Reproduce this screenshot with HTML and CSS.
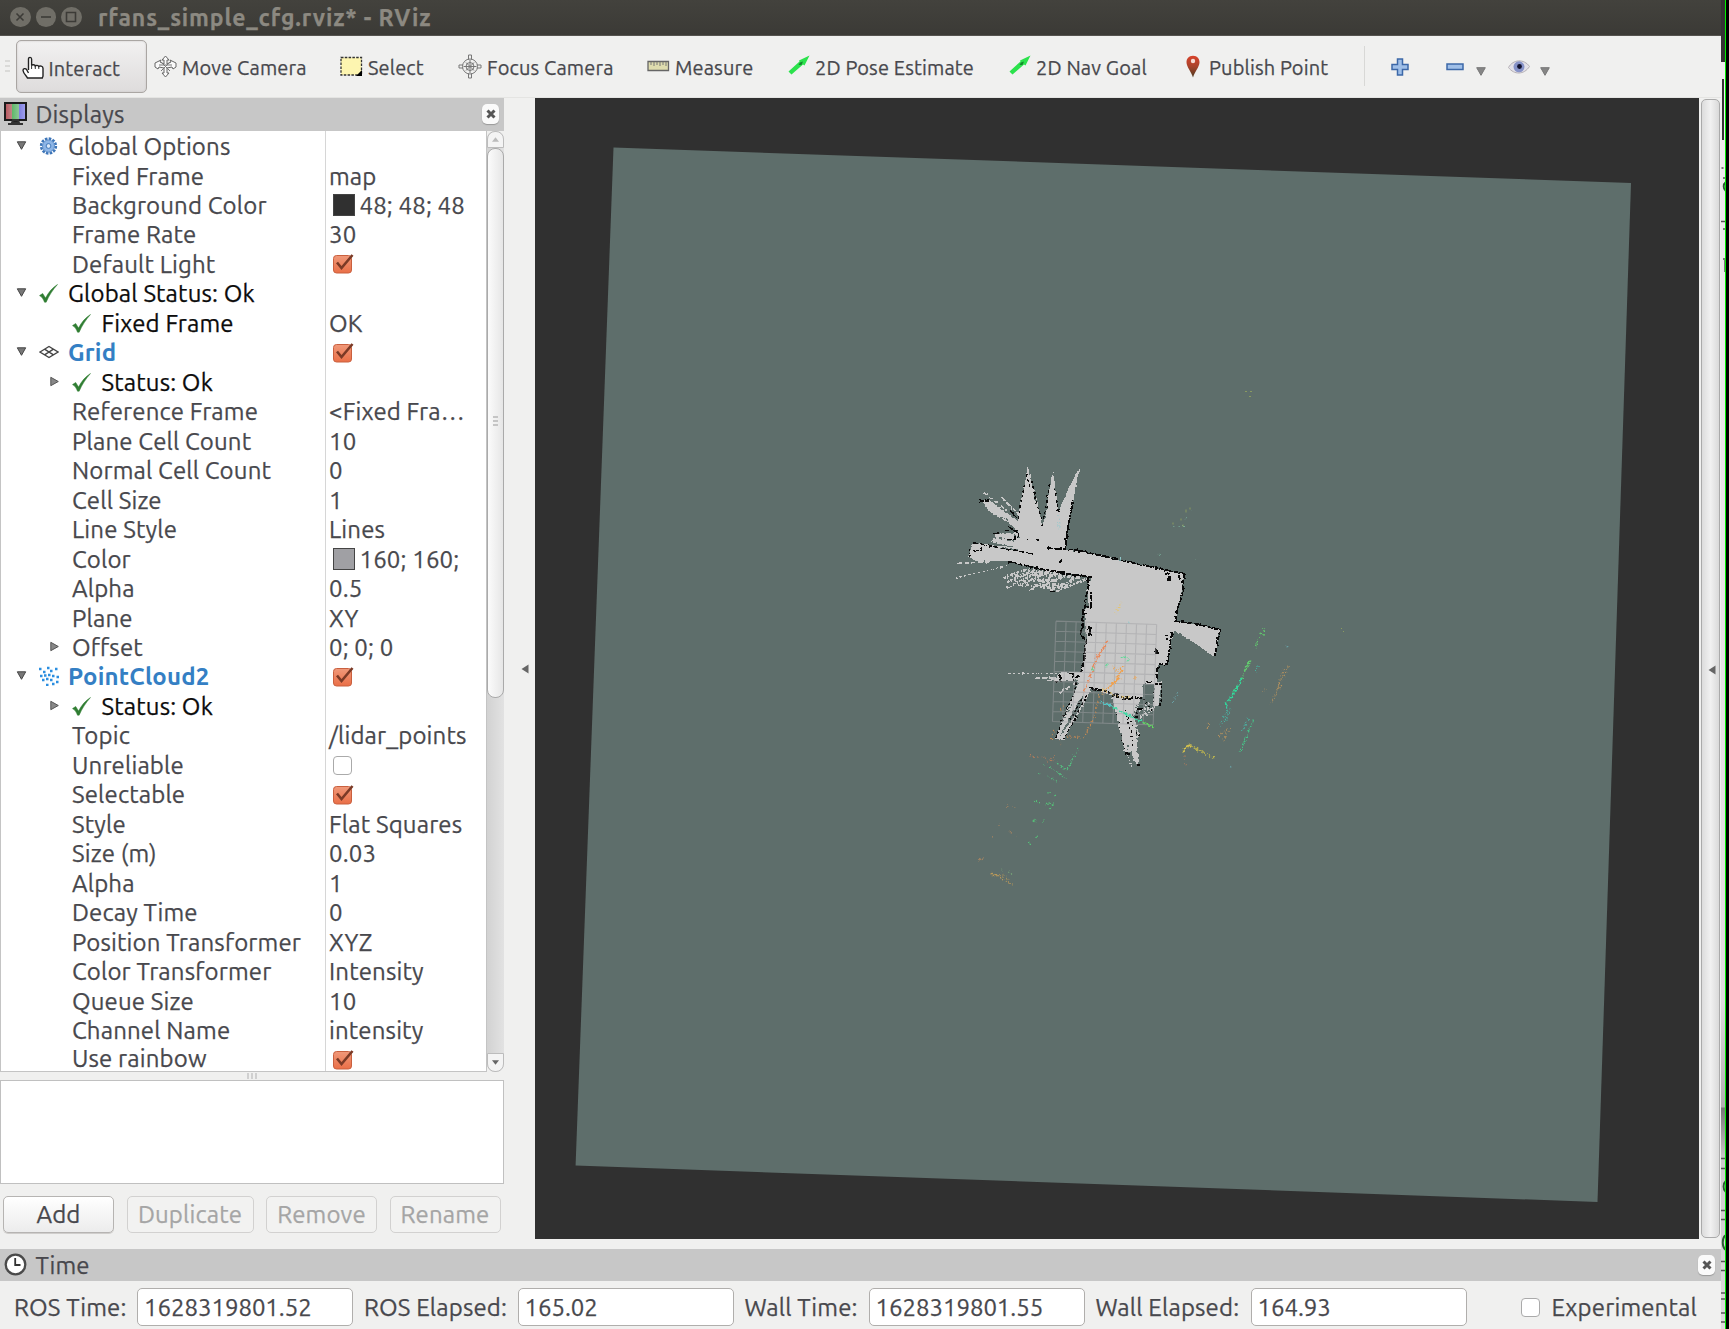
FILE: index.html
```html
<!DOCTYPE html>
<html lang="en">
<head>
<meta charset="utf-8">
<title>rfans_simple_cfg.rviz* - RViz</title>
<link rel="stylesheet" href="styles.css">
</head>
<body>
<svg class="defs" width="0" height="0" aria-hidden="true">
  <defs>
    <linearGradient id="orange" x1="0" y1="0" x2="0" y2="1"><stop offset="0" stop-color="#f0997a"/><stop offset="1" stop-color="#ea6f47"/></linearGradient>
    <linearGradient id="pinfill" x1="0" y1="0" x2="0" y2="1"><stop offset="0" stop-color="#d9432c"/><stop offset=".5" stop-color="#a8432b"/><stop offset="1" stop-color="#4a3a20"/></linearGradient>
    <linearGradient id="rgb" x1="0" y1="0" x2="1" y2="0"><stop offset="0" stop-color="#b8525c"/><stop offset=".33" stop-color="#c08585"/><stop offset=".34" stop-color="#5fb86a"/><stop offset=".66" stop-color="#8cc795"/><stop offset=".67" stop-color="#7f7fe0"/><stop offset="1" stop-color="#a3a3ee"/></linearGradient>
    <filter id="rough" x="-5%" y="-5%" width="110%" height="110%" color-interpolation-filters="sRGB"><feTurbulence type="fractalNoise" baseFrequency=".09" numOctaves="2" seed="4"/><feDisplacementMap in="SourceGraphic" scale="9" xChannelSelector="R" yChannelSelector="G"/></filter>
    <filter id="scatter" x="-5%" y="-5%" width="110%" height="110%" color-interpolation-filters="sRGB"><feTurbulence type="fractalNoise" baseFrequency=".12" numOctaves="2" seed="9"/><feDisplacementMap in="SourceGraphic" scale="16" xChannelSelector="R" yChannelSelector="G"/></filter>
    <symbol id="check" viewBox="0 0 22 22"><rect x="1.500" y="2.500" width="18" height="17.500" rx="3" fill="url(#orange)" stroke="#c9603f"/><path d="M5 9.500 9.500 15 20.500 2" fill="none" stroke="#7b3a26" stroke-width="2.600"/></symbol>
    <symbol id="ok" viewBox="0 0 18 18"><path d="M0.500 11 3.500 9 6.200 13.200C9 8 12.500 3.500 17.500.5 13 5.500 9.500 11 6.800 17.200H5.200C4.300 14.500 2.500 12 .5 11Z" fill="#2f7d32" stroke="#2f7d32" stroke-width=".5"/></symbol>
    <symbol id="open" viewBox="0 0 10 9"><path d="M.8.800H9.200L5 8.300Z" fill="#777" stroke="#444"/></symbol>
    <symbol id="closed" viewBox="0 0 9 10"><path d="M.8.800V9.200L8.300 5Z" fill="#888" stroke="#555"/></symbol>
    <symbol id="arrow" viewBox="0 0 22 20"><path d="M.5 16.500 11.500 6.500 11 5.500 21.500.5 16.500 10.500 15 9.500 3.500 19.500Z" fill="#2be24c"/><path d="M10.500 10 12 7.500l3-1-1.500 3.500Z" fill="#138a2b"/></symbol>
    <symbol id="drop" viewBox="0 0 10 9"><path d="M.7.700H9.300L5 8.300Z" fill="#858585" stroke="#777"/></symbol>
  </defs>
</svg>
<div class="desktop">
<div class="window">
  <header class="titlebar">
    <span class="dot"><svg viewBox="0 0 20 20"><path d="m6.500 6.500 7 7m0-7-7 7"/></svg></span>
    <span class="dot"><svg viewBox="0 0 20 20"><path d="M5 10H15"/></svg></span>
    <span class="dot"><svg viewBox="0 0 20 20"><path d="M5.500 5.500h9v9h-9Z"/></svg></span>
    <h1>rfans_simple_cfg.rviz* - RViz</h1>
  </header>

  <nav class="toolbar">
    <span class="grip"><i></i><i></i><i></i></span>
    <button class="tool active"><svg width="23" height="24" viewBox="0 0 23 24"><path d="M6.500 14V3.200C6.500.7 9.600.7 9.600 3.200V9.500C10 8.500 13 8.500 13.300 10c.8-1 3-.9 3.400.5 1-.9 4.300-.6 4.300 1.800V20c0 1-.8 1.500-.8 2H5.500C5 20 1.500 18 1 14.500 1 12.500 3.500 12 4.500 13.500L6.500 17" fill="#fff" stroke="#222" stroke-width="1.400"/><path d="M9.600 9v4M13.300 10v3M16.800 10.500V13" stroke="#333"/></svg><span>Interact</span></button>
    <span></span>
    <button class="tool"><svg width="23" height="23" viewBox="0 0 23 23"><path d="M11.500 1 15 5H13V9l4-2-1-2 6 3v4l-3 2-1-2-5 1v5h2l-3.500 4L8 18h2V13L5 12 4 14 1 12V8L7 5 6 7l4 2V5H8Z" fill="#fafafa" stroke="#666"/><path d="M7 7 16 16M16 7 7 16M5 10h13" stroke="#777" fill="none"/></svg><span>Move Camera</span></button>
    <button class="tool"><svg width="23" height="21" viewBox="0 0 23 21"><path d="M1 1.500H21.500V19H1Z" fill="#fdf5b0" stroke="#333" stroke-width="1.300" stroke-dasharray="2.500 1.300"/><path d="M22 14v6H16Z"/></svg><span>Select</span></button>
    <button class="tool"><svg width="24" height="25" viewBox="0 0 24 25"><g fill="none" stroke="#777"><circle cx="12" cy="12.500" r="7.500"/><circle cx="12" cy="12.500" r="4"/><path d="M12 6V19M5.500 12.500h13M10.500 5.500V1h3v4.500M10.500 19.500V24h3v-4.500M5 11H1v3h4M19 11h4v3h-4M8 8.500l8 8m0-8-8 8"/></g></svg><span>Focus Camera</span></button>
    <button class="tool"><svg width="23" height="12" viewBox="0 0 23 12"><path d="M1 1.500H21.500V10.500H1Z" fill="#dedcae" stroke="#666" stroke-width="1.300"/><path d="M4 2V5M7 2V6M10 2V5M13 2V6M16 2V5M19 2V6" stroke="#777"/></svg><span>Measure</span></button>
    <button class="tool"><svg class="rise" width="22" height="20"><use href="#arrow"/></svg><span>2D Pose Estimate</span></button>
    <button class="tool"><svg class="rise" width="22" height="20"><use href="#arrow"/></svg><span>2D Nav Goal</span></button>
    <button class="tool pin"><svg width="16" height="23" viewBox="0 0 16 23"><path d="M8 .7C3.500.7 1.500 3.800 1.500 7.300 1.500 12 6.500 17 8 22.500 9.500 17 14.500 12 14.500 7.300 14.500 3.800 12.500.7 8 .7Z" fill="url(#pinfill)"/><circle cx="8" cy="6" r="2.200" fill="#f6dcd4"/></svg><span>Publish Point</span></button>
    <span class="sep"></span>
    <svg class="glyph" width="18" height="18" viewBox="0 0 18 18"><path d="M6.500 1h5v5.500H17v5h-5.500V17h-5v-5.500H1v-5h5.500Z" fill="#9fbfe8" stroke="#3c68a8" stroke-width="1.500"/></svg>
    <svg class="glyph" width="18" height="8" viewBox="0 0 18 8"><path d="M1 1h16v5.500H1Z" fill="#9fbfe8" stroke="#3c68a8" stroke-width="1.500"/></svg>
    <svg class="glyph low" width="10" height="9"><use href="#drop"/></svg>
    <svg class="glyph" width="22" height="14" viewBox="0 0 22 14"><path d="M.5 7.500C5-.8 16-1.500 21.500 6.500 16 15 6 15 .5 7.500Z" fill="#e3e1e8" stroke="#b5b0b5"/><circle cx="11" cy="6.800" r="5.500" fill="#8793c8"/><circle cx="11.500" cy="6.500" r="2.400" fill="#12122e"/></svg>
    <svg class="glyph low" width="10" height="9"><use href="#drop"/></svg>
  </nav>

  <main class="workspace">
    <section class="displays">
      <div class="dock">
        <svg width="23" height="24" viewBox="0 0 23 24"><path d="M1 1H22V18H1Z" fill="url(#rgb)" stroke="#1b1b1b" stroke-width="2"/><path d="M9 18h5l1 3H8ZM4 22h15" fill="#222" stroke="#333" stroke-width="2"/></svg>
        <h2>Displays</h2><span class="close"><svg viewBox="0 0 10 10"><path d="m1.500 1.500 7 7m0-7-7 7"/></svg></span>
      </div>
      <div class="treewrap">
        <div class="tree">
          <div class="row top"><svg class="tw"><use href="#open"/></svg><svg class="ic gear" viewBox="0 0 20 20"><circle cx="10" cy="10" r="7.700" fill="none" stroke="#3d75b8" stroke-width="2.800" stroke-dasharray="2.700 1.330"/><circle cx="10" cy="10" r="6.300" fill="#8db5e6" stroke="#5b8cc8"/><circle cx="10" cy="10" r="2.500" fill="#dce9f8" stroke="#3d75b8"/></svg><span>Global Options</span><b></b></div>
          <div class="row"><span>Fixed Frame</span><b>map</b></div>
          <div class="row"><span>Background Color</span><b><i class="swatch dark"></i>48; 48; 48</b></div>
          <div class="row"><span>Frame Rate</span><b>30</b></div>
          <div class="row"><span>Default Light</span><b><svg class="cb"><use href="#check"/></svg></b></div>
          <div class="row top black"><svg class="tw"><use href="#open"/></svg><svg class="ic okay"><use href="#ok"/></svg><span>Global Status: Ok</span><b></b></div>
          <div class="row status black"><svg class="ic okay"><use href="#ok"/></svg><span>Fixed Frame</span><b class="soft">OK</b></div>
          <div class="row top blue"><svg class="tw"><use href="#open"/></svg><svg class="ic" viewBox="0 0 20 20"><path d="M1 10 10 4.500 19 10 10 15.500ZM5.500 7.200 14.500 12.800M14.500 7.200 5.500 12.800" fill="#fff" stroke="#444" stroke-width="1.400"/></svg><span>Grid</span><b><svg class="cb"><use href="#check"/></svg></b></div>
          <div class="row status sub black"><svg class="tw side"><use href="#closed"/></svg><svg class="ic okay"><use href="#ok"/></svg><span>Status: Ok</span><b></b></div>
          <div class="row"><span>Reference Frame</span><b>&lt;Fixed Fra…</b></div>
          <div class="row"><span>Plane Cell Count</span><b>10</b></div>
          <div class="row"><span>Normal Cell Count</span><b>0</b></div>
          <div class="row"><span>Cell Size</span><b>1</b></div>
          <div class="row"><span>Line Style</span><b>Lines</b></div>
          <div class="row"><span>Color</span><b><i class="swatch gray"></i>160; 160;</b></div>
          <div class="row"><span>Alpha</span><b>0.5</b></div>
          <div class="row"><span>Plane</span><b>XY</b></div>
          <div class="row sub"><svg class="tw side"><use href="#closed"/></svg><span>Offset</span><b>0; 0; 0</b></div>
          <div class="row top blue"><svg class="tw"><use href="#open"/></svg><svg class="ic" viewBox="0 0 20 20"><path d="M0 3h2.500M4 6h2.500M8 2h2.500M11 5h2.500M16 3h2.500M1 10h2.500M5 9.500h2.500M9 9h2.500M13 10h2.500M17.500 11H20M3 14h2.500M7 13h2.500M11 14h2.500M7 19h2.500M13 18h2.500M17 16h2.500" stroke="#2b8ee0" stroke-width="2.400"/></svg><span>PointCloud2</span><b><svg class="cb"><use href="#check"/></svg></b></div>
          <div class="row status sub black"><svg class="tw side"><use href="#closed"/></svg><svg class="ic okay"><use href="#ok"/></svg><span>Status: Ok</span><b></b></div>
          <div class="row"><span>Topic</span><b>/lidar_points</b></div>
          <div class="row"><span>Unreliable</span><b><i class="box"></i></b></div>
          <div class="row"><span>Selectable</span><b><svg class="cb"><use href="#check"/></svg></b></div>
          <div class="row"><span>Style</span><b>Flat Squares</b></div>
          <div class="row"><span>Size (m)</span><b>0.03</b></div>
          <div class="row"><span>Alpha</span><b>1</b></div>
          <div class="row"><span>Decay Time</span><b>0</b></div>
          <div class="row"><span>Position Transformer</span><b>XYZ</b></div>
          <div class="row"><span>Color Transformer</span><b>Intensity</b></div>
          <div class="row"><span>Queue Size</span><b>10</b></div>
          <div class="row"><span>Channel Name</span><b>intensity</b></div>
          <div class="row last"><span>Use rainbow</span><b><svg class="cb"><use href="#check"/></svg></b></div>
        </div>
        <div class="scroll">
          <span class="step up"><svg viewBox="0 0 8 5"><path d="M4 0 8 5H0Z"/></svg></span>
          <span class="thumb"><i></i><i></i><i></i></span>
          <span class="step down"><svg viewBox="0 0 8 5"><path d="M0 0H8L4 5Z"/></svg></span>
        </div>
      </div>
      <div class="splitter"><i></i><i></i><i></i></div>
      <div class="help"></div>
      <div class="actions"><button>Add</button><button disabled>Duplicate</button><button disabled>Remove</button><button disabled>Rename</button></div>
    </section>
    <div class="collapse"><svg width="8" height="10" viewBox="0 0 8 10"><path d="M7.500.500V9.500L.5 5Z"/></svg></div>

    <svg class="view" viewBox="535 97.500 1164 1141.500" preserveAspectRatio="none">
      <path d="M613.500 147 1631 182.500 1597.500 1201.500 575.600 1165Z" fill="#5e6e6b"/>
      <!-- occupancy map -->
      <g transform="translate(940 450) scale(.33333)" shape-rendering="crispEdges" filter="url(#rough)">
        <g fill="#c8c8c8">
          <path d="M263 45 275 100 292 150 305 225 316 205 328 120 338 62 348 120 355 185 385 115 418 50 400 150 385 230 376 297 455 308 535 325 600 343 733 370 722 440 706 512 770 522 840 538 832 580 824 620 760 575 702 540 692 590 685 638 655 645 650 695 632 695 632 738 606 740 590 770 583 800 597 850 590 890 598 945 580 930 575 905 555 908 545 860 530 800 515 735 455 712 430 765 370 868 345 866 375 790 402 730 418 690 345 688 320 686 350 678 365 665 425 665 432 600 440 560 432 480 447 470 440 410 455 380 380 370 300 355 200 332 110 333 85 318 100 275 160 285 230 290 155 275 165 250 235 245 200 205 150 185 125 150 150 150 235 212 240 160 255 100Z"/>
          <path d="M606 738V695H665L655 768 640 765 642 700H632V738Z"/>
        </g>
        <path d="m430 735-18 22-55 105 65-90ZM610 700h22v60h-22Z" fill="#5e6e6b"/>
        <g fill="none" stroke="#5e6e6b" stroke-width="4">
          <path d="M165 262 225 272M150 288 235 298M200 240 240 262M175 200 225 236M282 130 300 190" stroke-dasharray="6 5 11 4"/>
          <path d="M590 760 580 800M600 745 612 770M560 900 566 880M588 830 592 870M395 760 360 830" stroke-dasharray="5 6"/>
        </g>
        <g fill="none" stroke="#c8c8c8" stroke-width="4">
          <path d="M50 339 160 333M285 682H345M320 690H400M358 727 420 690M185 140 235 190M150 180 225 228M130 125 200 180" stroke-width="5" stroke-dasharray="16 5"/>
          <path d="M45 383 210 344M205 669H350" stroke-dasharray="7 7"/>
          <path d="M190 382 270 352M200 395 290 356M200 412 310 358M235 405 330 362M270 418 350 368M300 410 380 372M330 420 420 378M350 422 440 385" stroke-width="7" stroke-dasharray="9 3 5 4"/>
          <path d="M250 360 400 375M290 372 420 382M215 375 290 372M225 392 350 390M245 405 370 402M310 412 380 408" stroke-width="8" stroke-dasharray="5 6 12 4"/>
          <path d="M590 790 630 755M600 800 645 768M620 795 640 775M563 910 572 950M586 775H640" stroke-width="5" stroke-dasharray="5 4"/>
        </g>
        <g fill="none" stroke="#080808" stroke-width="4">
          <path d="M376 297 378 270 384 230 400 150M320 292 378 297 400 297 455 309 535 327 600 342 733 370M203 333 300 355 380 370 455 380" stroke-width="5.500" stroke-dasharray="30 2 14 3"/>
          <path d="M732 370 727 430 714 470 706 512 770 520M770 520 840 538 824 620" stroke-width="5.500" stroke-dasharray="14 4"/>
          <path d="M443 380 445 415 437 440 436 470H452V425M430 475 428 530 420 550 438 570 434 600 430 640 424 664M697 545 688 600 682 640 662 640 652 655V690" stroke-width="5.500" stroke-dasharray="18 3"/>
          <path d="M450 712 500 722 530 740 608 742M460 718H490M515 733H535M550 745H572" stroke-width="7" stroke-dasharray="9 5"/>
          <path d="M402 728 410 695M400 735 370 800 348 862M440 735 405 805 372 865M425 745 390 810" stroke-dasharray="7 6"/>
          <path d="M235 205 243 150 255 100M310 205 320 160 330 95M258 70 270 110M275 90 290 160 305 205M355 185 345 110" stroke-dasharray="9 7"/>
          <path d="M116 152H145V142M200 268H225V255M100 300H125V288M195 240 230 240M88 296 90 320M100 277 180 292 280 311M330 424H352M345 694H360V675M385 670H400V692M405 680H425M160 250H180M210 180 232 205M205 228 236 250V262" stroke-dasharray="16 4"/>
          <path d="M288 268h10M257 266h7M358 332h8M303 224h5M443 533h14M450 533v25M443 553h14M675 370h15M680 388h12M688 376v12M675 555h10M682 562v8M648 595v12h8M718 375v15M615 693h18M590 775h16M583 800h10M555 910h16M592 944h7M597 856v-6" stroke-width="5.500"/>
          <path d="M645 700h20v40l-7 30M425 520v30M432 490h8" stroke-width="5" stroke-dasharray="8 5"/>
          <path d="M555 780 575 850 578 885M565 800 590 850M530 790 545 860 556 905M610 745 635 780M590 760V800M640 700V760" stroke-dasharray="4 9"/>
        </g>
      </g>
      <!-- reference grid -->
      <g transform="translate(940 450) scale(.33333) matrix(30.200 1 -1.050 30.100 348 512)"><path d="M0 0V10M1 0V10M2 0V10M3 0V10M4 0V10M5 0V10M6 0V10M7 0V10M8 0V10M9 0V10M10 0V10M0 0H10M0 1H10M0 2H10M0 3H10M0 4H10M0 5H10M0 6H10M0 7H10M0 8H10M0 9H10M0 10H10" stroke="#a0a0a4" stroke-opacity=".5" stroke-width=".11" fill="none"/></g>
      <!-- lidar returns, coloured by intensity -->
      <g transform="translate(940 450) scale(.33333)" fill="none" stroke-width="5" filter="url(#scatter)">
        <path d="M503 570 470 625 450 680 430 725" stroke="#e8885a" stroke-dasharray="12 4"/>
        <path d="M548 645 530 690 495 718M515 700 540 680" stroke="#f0a04c" stroke-width="7" stroke-dasharray="7 3"/>
        <path d="M520 650 540 665M585 680v8M500 725 470 735" stroke="#e8a860" stroke-dasharray="5 6"/>
        <path d="M545 620h18v12M455 655h8M500 640v10" stroke="#62d898" stroke-dasharray="6 3"/>
        <path d="M480 752 520 770" stroke="#54c5c5"/><path d="M520 770 575 800 610 815" stroke="#42d7a5" stroke-dasharray="14 3"/><path d="M610 815 642 831" stroke="#62d860"/>
        <path d="M490 718 535 740 575 742M525 490 545 455" stroke="#e3c576" stroke-dasharray="4 6"/>
        <path d="M357 195V240M540 325h10M565 517h6" stroke="#8fc9cc" stroke-dasharray="3 7"/>
        <path d="M463 800 430 865M345 830 333 870M380 860h40M478 740 460 800M370 765 365 780" stroke="#c48952" stroke-dasharray="5 6" stroke-width="4"/>
        <path d="M703 228h35M736 203v3M752 178v3M658 310v4M768 327v3" stroke="#7ab09c" stroke-dasharray="3 10" stroke-width="3"/>
      </g>
      <g transform="translate(960 640) scale(.33333)" fill="none" stroke-width="4" filter="url(#scatter)">
        <path d="M914-36 900-12 885 20M905-20h12M868 60 855 90 843 125 820 155M873 60 850 95" stroke="#62cc6e" stroke-dasharray="9 5"/>
        <path d="M845 115 825 155 798 190V205" stroke="#32d79b" stroke-width="6" stroke-dasharray="10 2"/>
        <path d="M800 195 800 215 780 255M812 205 795 245M865 235 845 275M885 95 895 75" stroke="#49b5a5" stroke-dasharray="4 5"/>
        <path d="M880 240 850 310 840 335" stroke="#48c288" stroke-dasharray="11 4"/>
        <path d="M985 75 960 135 930 195M970 85 945 165M915 145 905 160M810 260 790 305M745 250 740 270M800 265 770 290" stroke="#b5925e" stroke-dasharray="4 6"/>
        <path d="M670 335 685 315 700 318M672 325 688 312" stroke="#d8c44c" stroke-width="5" stroke-dasharray="6 2"/>
        <path d="M700 318 765 355M705 325 730 332" stroke="#c8bd4c" stroke-dasharray="6 5"/>
        <path d="M675 345V372M210 345 265 355M268 355 285 345M330 290H365M300 300 305 315M270 360H285M258 362 275 350" stroke="#b07c5c" stroke-dasharray="4 7"/>
        <path d="M355 325 335 360 320 390 300 380M270 380 290 395 316 412M265 410 297 425M250 370h4M237 397h4M290 368 310 378" stroke="#55c080" stroke-dasharray="6 5"/>
        <path d="M265 457h10M283 465h5M225 482 240 487M255 492 282 490 270 505M218 538 228 542M250 542h4M226 588l4 4M206 609h4" stroke="#55c278" stroke-dasharray="6 4"/>
        <path d="M138 497h8M160 500h6M149 574h4M96 589h4M118 552v4M55 662 68 654M165 586h4" stroke="#a58462"/>
        <path d="M92 698 112 706 140 722 160 736M98 705 130 705 150 720" stroke="#b8985a" stroke-dasharray="5 5"/>
        <path d="M125 685v5M145 690 160 707" stroke="#79a878" stroke-dasharray="4 8"/>
        <path d="M810 378 820 384M978 18h4M640 185 650 160" stroke="#69a0a5" stroke-dasharray="4 8"/>
      </g>
      <path d="M1245 391h2M1250 391h2M1249 396h2M1186 509v3M1190 507v2M1181 518v2M1183 524v2M1173 522v2M1341 628h1M1343 631h1" stroke="#8a9a60" fill="none"/>
    </svg>
    <div class="rightbar"><svg width="8" height="10" viewBox="0 0 8 10"><path d="M7.500.500V9.500L.5 5Z"/></svg></div>
  </main>

  <section class="time">
    <div class="dock">
      <svg width="23" height="23" viewBox="0 0 23 23"><circle cx="11.500" cy="11.500" r="9.800" fill="#fff" stroke="#4a4a4a" stroke-width="2.300"/><path d="M11.200 5V12H16.500" fill="none" stroke="#333" stroke-width="1.800"/></svg>
      <h2>Time</h2><span class="close"><svg viewBox="0 0 10 10"><path d="m1.500 1.500 7 7m0-7-7 7"/></svg></span>
    </div>
    <div class="fields">
      <label class="w1">ROS Time:</label><output>1628319801.52</output>
      <label class="w2">ROS Elapsed:</label><output>165.02</output>
      <label class="w3">Wall Time:</label><output>1628319801.55</output>
      <label class="w4">Wall Elapsed:</label><output>164.93</output>
      <i class="box"></i><label class="exp">Experimental</label>
    </div>
  </section>
</div>
<aside class="behind">
  <svg width="5" height="1329" viewBox="0 0 5 1329"><path d="M1 79h2v61H1Z" fill="#333"/><path d="M.5 168h2M2 178h3M0 221.500h5M2 229h3M2 259h3M4 260v12M0 1158.500h5M0 1168.500h5M0 1210.500h5M0 1219.500h5M0 1261.500h5M0 1270.500h5M0 1293h5M0 1299h5M0 1313h5M0 1322h5" stroke="#555" stroke-width="1.500"/><path d="M5 182a4 5 0 0 0 0 9M5 1181a4 6 0 0 0 0 11M5 1235a5 8 0 0 0 0 15" fill="none" stroke="#2c5a35" stroke-width="2"/></svg>
</aside>
<div class="edge"></div>
</div>
</body>
</html>
```
FILE: styles.css
```css
* { box-sizing: border-box; }
body { margin: 0; background: #000; overflow: hidden; font-family: Ubuntu, "Noto Sans", sans-serif; font-size: 24px; letter-spacing: .14px; color: #48484d; -webkit-text-stroke: .25px; }
h1, h2 { margin: 0; }
button { font: inherit; letter-spacing: inherit; color: inherit; background: none; border: 0; padding: 0; margin: 0; }
svg { display: block; flex: none; }
.defs { position: absolute; }
.desktop { display: flex; width: 1729px; height: 1329px; }
.window { width: 1721px; display: flex; flex-direction: column; background: #f0f0ef; }

.titlebar { height: 35.500px; flex: none; display: flex; align-items: center; gap: 5px; padding-left: 10px; background: linear-gradient(#43423d, #3b3a36); border-bottom: 1px solid #55534f; }
.titlebar h1 { margin-left: 11.500px; padding-top: 2px; font-size: 23px; font-weight: 700; line-height: 34px; letter-spacing: .85px; color: #8c8981; white-space: nowrap; }
.dot { width: 20.500px; height: 20px; border-radius: 50%; background: #706e67; }
.dot svg { width: 20px; height: 20px; fill: none; stroke: #3c3b37; stroke-width: 1.600; }

.toolbar { height: 62px; flex: none; display: grid; grid-template-columns: 15.500px 131px 7.500px 186px 118px 189px 141px 221px 176px 179px 27px 55px 30px 31.500px 32px auto; align-items: center; font-size: 20px; border-bottom: 1px solid #e4e4e2; }
.tool { display: flex; align-items: center; gap: 5px; height: 53px; white-space: nowrap; text-align: left; line-height: 26px; }
.tool span { padding-top: 3px; }
.tool.active { gap: 4px; padding-left: 6px; border: 1px solid #aaa6a3; border-radius: 5px; background: linear-gradient(#f2f1f1, #dedcdc); box-shadow: inset 0 0 2px #c4c1c1; }
.tool.active svg { margin-top: 3px; margin-left: -1px; }
.tool.active span { padding-top: 5px; }
.tool svg.rise { position: relative; top: -1px; }
.tool.pin { gap: 8px; }
.grip { display: grid; gap: 3px; margin-left: 5px; width: 5px; }
.grip i { height: 2px; background: #dadad8; }
.sep { width: 1px; height: 40px; background: #d8d8d6; }
.glyph { margin-top: 1px; }
.glyph.low { margin-top: 10px; }

.workspace { flex: none; height: 1142px; display: flex; }
.displays { width: 504px; display: flex; flex-direction: column; }
.dock { height: 33px; flex: none; display: flex; align-items: center; background: #c7c7c7; padding: 0 5px 0 4px; }
.dock h2 { font-size: 24px; font-weight: 400; margin-left: 8.500px; padding-top: 1px; line-height: 31px; flex: 1; }
.close { width: 17px; height: 20px; display: grid; place-items: center; border-radius: 5px; background: #fafafa; box-shadow: 0 1px 1px #999; }
.close svg { width: 10px; height: 10px; stroke: #555; stroke-width: 3; }
.treewrap { height: 941px; flex: none; display: flex; }
.tree { width: 487px; padding-top: 1.300px; overflow: hidden; border: solid #c4c4c4; border-width: 0 1px 1px; background: linear-gradient(90deg, transparent 324px, #d6d6d6 324px, #d6d6d6 325px, transparent 325px) #fff; }
.row { height: 29.480px; display: flex; align-items: center; line-height: 29px; white-space: nowrap; padding-left: 71px; }
.row span { flex: 1; }
.row b { width: 157px; flex: none; font-weight: 400; display: flex; align-items: center; }
.row.last { height: 25.500px; line-height: 25px; padding-top: 0; align-items: flex-end; }
.row.last b { height: 25.500px; padding-top: 3px; }
.row.last span { padding-top: 2px; }
.row.top { padding-left: 15px; }
.row.sub { padding-left: 49px; }
.row.status { padding-left: 71px; }
.row.status.sub { padding-left: 49px; }
.tw { width: 11px; height: 9px; margin: 0 11.500px 3px 0; }
.tw.side { width: 9px; height: 11px; margin: 0 13px 2px 0; }
.ic { width: 20px; height: 20px; margin: 0 9.500px 1px 0; }
.gear { width: 19px; margin-right: 10.500px; }
.okay { width: 19px; height: 19px; margin: 0 10.500px 0 0; }
.status .okay { margin-right: 10.500px; }
.black { color: #0c0c0c; }
.soft { color: #48484d; }
.blue span { font-weight: 700; color: #347fc4; letter-spacing: .2px; -webkit-text-stroke: 0; }
.cb { width: 22px; height: 22px; margin-left: 3px; }
.swatch { width: 22px; height: 22px; margin: 0 5px 1px 3.500px; border: 1px solid #444; }
.dark { background: #303030; }
.gray { background: #a0a0a4; }
.box { width: 19px; height: 19px; margin-left: 4px; border: 1.500px solid #aaa; border-radius: 4px; background: #fff; }

.scroll { width: 17px; display: flex; flex-direction: column; background: linear-gradient(90deg, #d2d2d2, #e2e2e2); border-radius: 8px; }
.step { height: 17px; flex: none; display: grid; place-items: center; background: #f4f4f4; border: 1px solid #bcbcbc; }
.step svg { width: 7px; height: 5px; fill: #666; }
.up { border-radius: 8px 8px 0 0; }
.up svg { fill: #bbb; }
.down { height: 19px; margin-top: auto; border-radius: 0 0 8px 8px; }
.thumb { height: 550px; display: flex; flex-direction: column; gap: 2px; align-items: center; justify-content: center; padding-bottom: 4px; border: 1px solid #aaa; border-radius: 8px; background: linear-gradient(90deg, #fbfbfb, #e6e6e6); }
.thumb i { width: 5px; height: 2px; background: #c5c5c5; }
.splitter { height: 8.500px; flex: none; display: flex; align-items: center; justify-content: center; gap: 2px; }
.splitter i { width: 2px; height: 6px; background: #d0d0d0; }
.help { height: 104px; flex: none; background: #fff; border: 1px solid #c0c0c0; }
.actions { display: grid; grid-template-columns: 111px 127px 111px 111px; gap: 12.500px; padding: 11.500px 0 0 3px; }
.actions button { height: 37px; line-height: 36px; border: 1px solid #b6b4b2; border-radius: 5px; background: linear-gradient(#fff, #ececec); box-shadow: 0 1px 0 #d0cecc; }
.actions button:disabled { color: #a5a5a5; border-color: #d2d1d0; background: #f2f2f1; box-shadow: none; }

.collapse { width: 31px; display: flex; align-items: center; justify-content: center; padding: 1px 0 0 11px; }
.collapse svg, .rightbar svg { fill: #666; }
.view { width: 1164px; height: 1141.500px; background: #303030; }
.rightbar { width: 18.500px; height: 1139px; margin: 1px 0 0 2px; display: flex; align-items: center; padding: 3px 0 0 6px; border: 1px solid #aaa; border-radius: 5px; background: linear-gradient(90deg, #dcdcdc, #f1f1f1 50%, #dadada); }

.time { flex: 1; padding-top: 9px; }
.time .dock { height: 32px; padding-right: 6px; }
.fields { height: 48.500px; display: flex; align-items: center; padding: 5px 0 0 14px; }
.fields label { white-space: nowrap; flex: none; line-height: 34px; padding-top: 2px; }
.fields output { width: 216px; height: 38px; flex: none; line-height: 37px; letter-spacing: -.05px; padding-left: 6px; margin-right: 11px; border: 1.500px solid #b0aeac; border-radius: 5px; background: #fff; }
.fields .w1 { width: 123px; }
.fields .w2 { width: 153.500px; }
.fields .w3 { width: 124px; }
.fields .w4 { width: 155px; }
.fields .box { margin-left: 43px; }
.fields .exp { margin-left: 12px; }

.behind { width: 4px; overflow: hidden; background: linear-gradient(#333 0 62px, #eee 62px, #ddd 1000px, #b0b0b0 1107px, #777 1108px, #ccc 1160px, #ddd); }
.edge { width: 4px; border-left: 1.500px solid #00f000; background: #000; }
```
